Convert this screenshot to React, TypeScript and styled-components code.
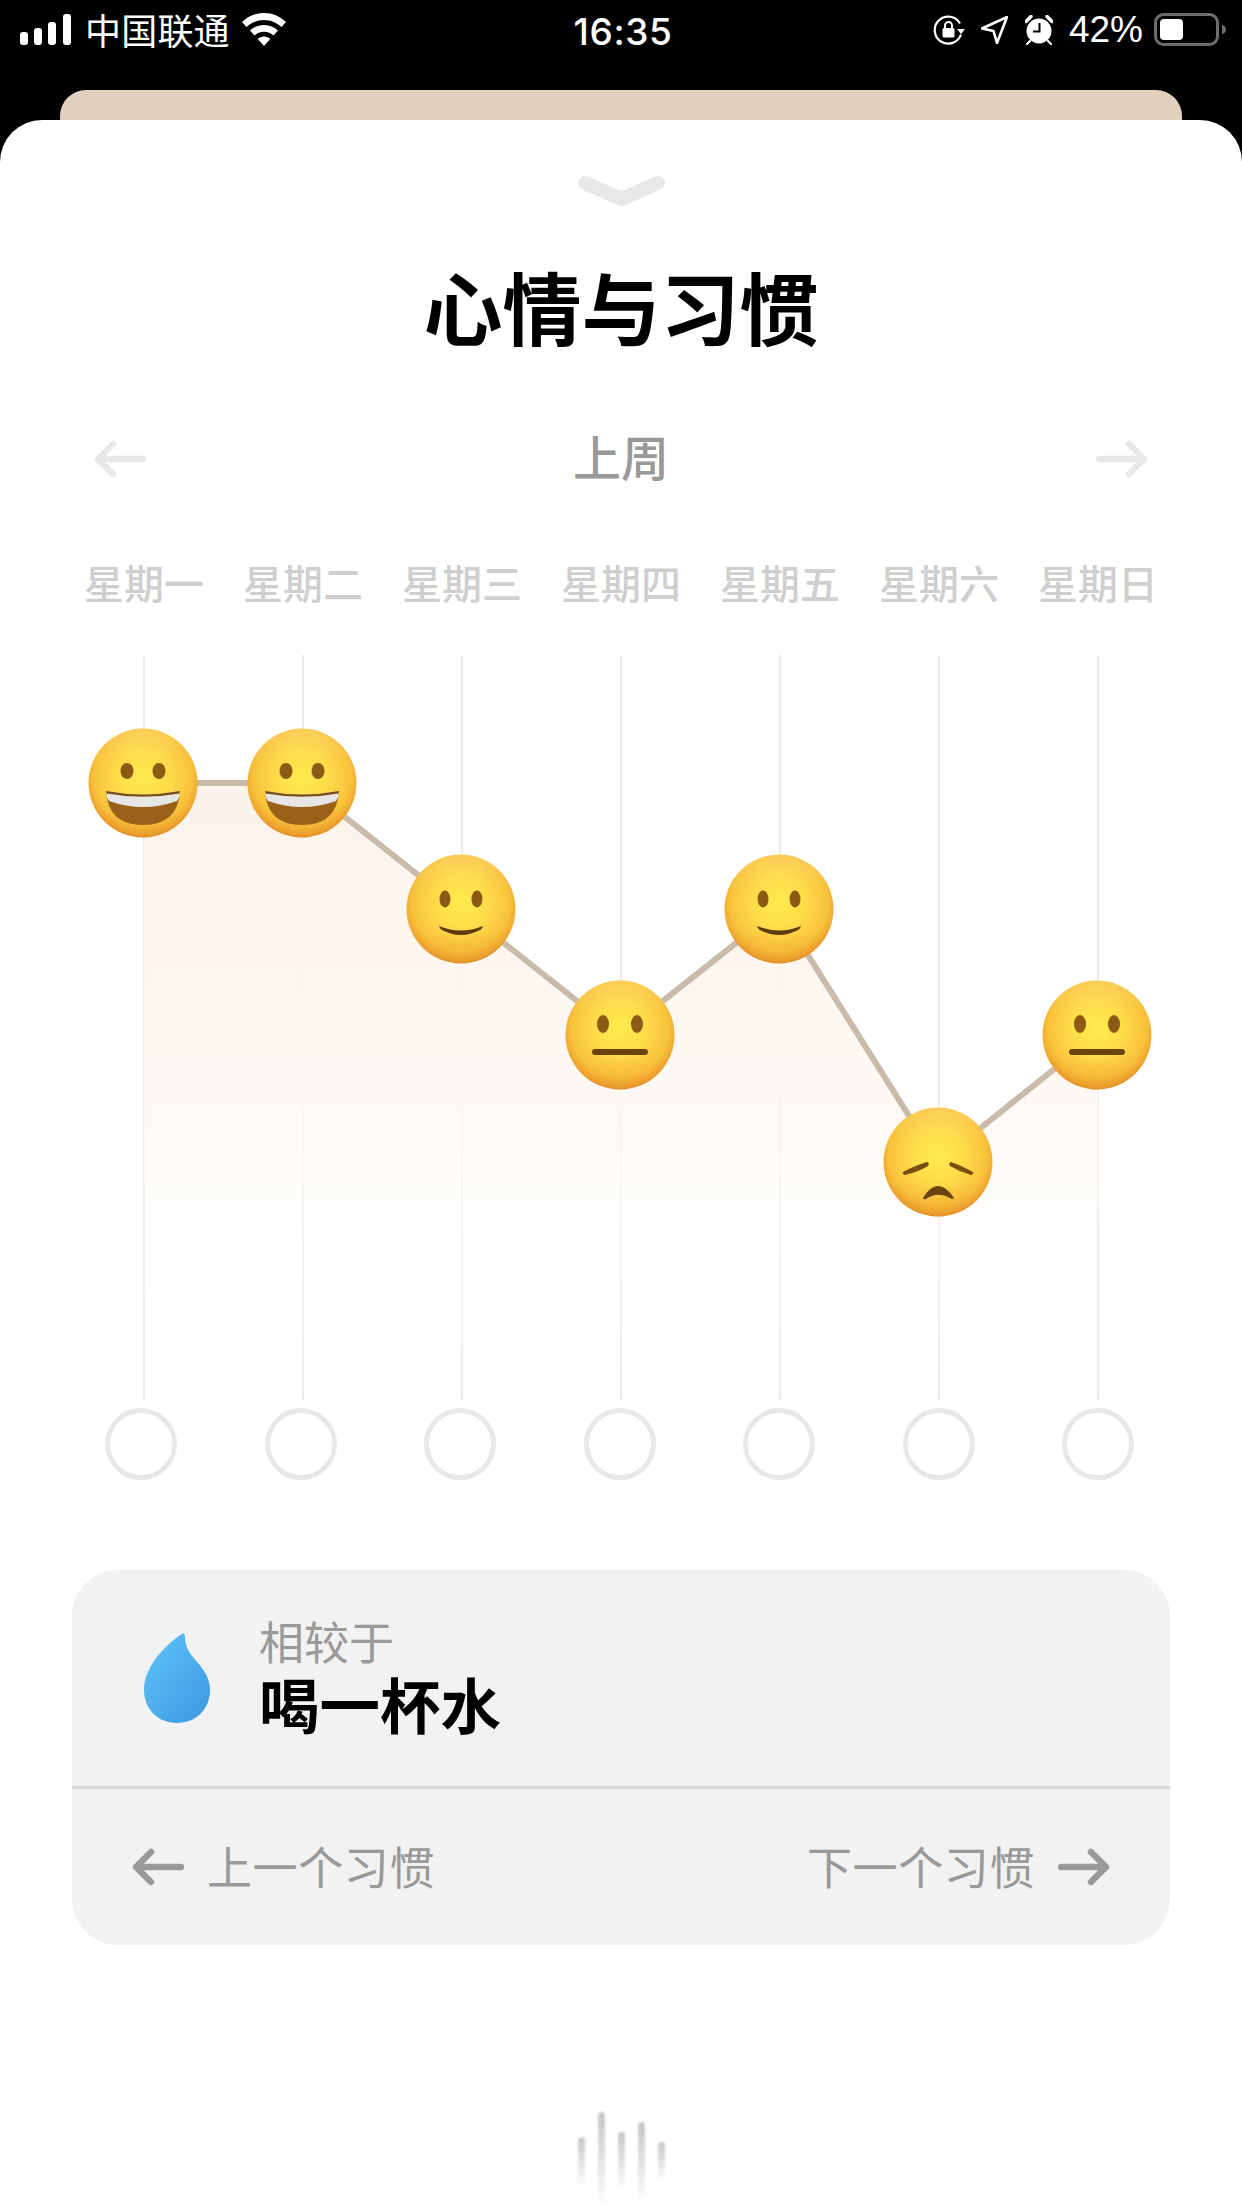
import React from 'react';
import styled, { createGlobalStyle } from 'styled-components';

const GlobalStyle = createGlobalStyle`
  html, body {
    margin: 0;
    padding: 0;
    background: #000;
  }
  * {
    box-sizing: border-box;
  }
`;

const cjk = `"Noto Sans CJK SC", "Liberation Sans", sans-serif`;

const Page = styled.div`
  width: 1242px;
  height: 2208px;
  background: #000;
  display: flex;
  flex-direction: column;
  overflow: hidden;
  font-family: ${cjk};
`;

const StatusBar = styled.div`
  height: 90px;
  padding: 13px 16px 0 20px;
  display: grid;
  grid-template-columns: 1fr auto 1fr;
  align-items: start;
  color: #fff;
`;

const StatusGroup = styled.div<{ $end?: boolean }>`
  display: flex;
  align-items: center;
  height: 33px;
  justify-content: ${(p) => (p.$end ? 'flex-end' : 'flex-start')};
`;

const Carrier = styled.span`
  font-size: 36px;
  font-weight: 400;
  line-height: 33px;
  letter-spacing: 0.2px;
  margin: 0 12px 0 14px;
`;

const Clock = styled.span`
  font-family: "Inter", "Liberation Sans", sans-serif;
  font-size: 37px;
  font-weight: 500;
  line-height: 38px;
  letter-spacing: 0.6px;
`;

const Battery = styled.span`
  font-family: "Liberation Sans", sans-serif;
  font-size: 37px;
  line-height: 33px;
  margin: 0 11px 0 16px;
`;

const StatusIcon = styled.svg<{ $gap?: number }>`
  display: block;
  flex: none;
  margin-left: ${(p) => p.$gap || 0}px;
`;

const BackCard = styled.div`
  height: 30px;
  margin: 0 60px;
  background: #e2d0bf;
  border-radius: 26px 26px 0 0;
`;

const Sheet = styled.div`
  flex: 1;
  background: #fff;
  border-radius: 42px 42px 0 0;
  display: flex;
  flex-direction: column;
  align-items: center;
`;

const Chevron = styled.svg`
  display: block;
  margin-top: 55px;
  margin-bottom: 1px;
`;

const Title = styled.h1`
  margin: 53px 0 4px;
  font-size: 79px;
  line-height: 90px;
  font-weight: 700;
  color: #000;
`;

const WeekNav = styled.div`
  width: 100%;
  height: 60px;
  margin-top: 74px;
  padding: 0 94px;
  display: flex;
  align-items: center;
  justify-content: space-between;
`;

const WeekLabel = styled.span`
  font-size: 48px;
  line-height: 60px;
  font-weight: 500;
  color: #999;
  margin-bottom: 8px;
`;

const DayGrid = styled.div<{ $top: number; $col: number; $shift?: number }>`
  margin-top: ${(p) => p.$top}px;
  margin-right: ${(p) => p.$shift || 0}px;
  display: grid;
  grid-template-columns: repeat(7, ${(p) => p.$col}px);
  justify-items: center;
`;

const DayName = styled.span`
  font-size: 40px;
  line-height: 50px;
  font-weight: 500;
  color: #cfcfcf;
`;

const Chart = styled.svg`
  display: block;
  margin-top: 48px;
  flex: none;
`;

const HabitDot = styled.div`
  width: 72px;
  height: 72px;
  border-radius: 50%;
  border: 5px solid #e8e8e8;
`;

const HabitCard = styled.div`
  width: 1098px;
  height: 375px;
  margin-top: 90px;
  background: #f2f2f2;
  border-radius: 46px;
  display: flex;
  flex-direction: column;
`;

const HabitInfo = styled.div`
  height: 219px;
  padding-left: 72px;
  display: flex;
  align-items: center;
  gap: 49px;
  border-bottom: 3px solid #d9d9d9;
`;

const HabitText = styled.div`
  display: flex;
  flex-direction: column;
  padding-bottom: 3px;
`;

const CompareLabel = styled.span`
  font-size: 45px;
  line-height: 52px;
  color: #999;
`;

const HabitName = styled.span`
  font-size: 60.5px;
  line-height: 72px;
  font-weight: 700;
  color: #000;
`;

const HabitNav = styled.div`
  flex: 1;
  padding: 0 60px;
  display: flex;
  align-items: center;
  justify-content: space-between;
`;

const NavLink = styled.div`
  display: flex;
  align-items: center;
  gap: 23px;
`;

const NavText = styled.span`
  font-size: 45px;
  letter-spacing: 0.6px;
  color: #999;
  margin-bottom: 4px;
`;

const Wave = styled.div`
  height: 91px;
  margin-top: 167px;
  display: flex;
  align-items: flex-start;
  gap: 13px;
  filter: blur(0.8px);
`;

const WaveBar = styled.div<{ $offset: number; $height: number }>`
  width: 7px;
  height: ${(p) => p.$height}px;
  margin-top: ${(p) => p.$offset}px;
  border-radius: 4px 4px 0 0;
  background: linear-gradient(180deg, #c6c6c6, rgba(200, 200, 200, 0.05));
`;

const days = ['星期一', '星期二', '星期三', '星期四', '星期五', '星期六', '星期日'];

type Mood = 'grin' | 'smile' | 'neutral' | 'sad';

const moods: { x: number; y: number; mood: Mood; lineX: number }[] = [
  { x: 143, y: 783, mood: 'grin', lineX: 144 },
  { x: 302, y: 783, mood: 'grin', lineX: 303 },
  { x: 461, y: 909, mood: 'smile', lineX: 462 },
  { x: 620, y: 1035, mood: 'neutral', lineX: 621 },
  { x: 779, y: 909, mood: 'smile', lineX: 780 },
  { x: 938, y: 1162, mood: 'sad', lineX: 939 },
  { x: 1097, y: 1035, mood: 'neutral', lineX: 1098 },
];

const waveBars = [
  { offset: 25, height: 47 },
  { offset: 0, height: 91 },
  { offset: 20, height: 56 },
  { offset: 10, height: 78 },
  { offset: 30, height: 37 },
];

function Arrow({ dir, color }: { dir: 'left' | 'right'; color: string }) {
  return (
    <svg width="52" height="38" viewBox="0 0 52 38" style={{ display: 'block', flex: 'none' }}>
      <g
        fill="none"
        stroke={color}
        strokeWidth="6.5"
        strokeLinecap="round"
        strokeLinejoin="round"
        transform={dir === 'right' ? 'matrix(-1 0 0 1 52 0)' : undefined}
      >
        <path d="M49 19H5" />
        <path d="M19 4L4 19l15 15" />
      </g>
    </svg>
  );
}

function Face({ x, y, mood }: { x: number; y: number; mood: Mood }) {
  const brown = '#8c5a14';
  return (
    <g transform={`translate(${x} ${y})`}>
      <circle r="54.5" fill="url(#faceFill)" />
      <circle r="54.5" fill="url(#faceShade)" />
      {mood === 'grin' && (
        <>
          <ellipse cx="-16" cy="-12" rx="6.5" ry="8" fill={brown} />
          <ellipse cx="16" cy="-12" rx="6.5" ry="8" fill={brown} />
          <path d="M-37 8Q0 16 37 8Q35 42 0 42Q-35 42-37 8Z" fill="#9a6218" />
          <path d="M-37 8Q0 15 37 8Q37 14 34 18Q0 30-34 18Q-37 14-37 8Z" fill="#e6e6e6" />
          <path d="M-37 8Q0 15 37 8L36.500 10.500Q0 17-36.500 10.500Z" fill="#7a4e12" />
        </>
      )}
      {mood === 'smile' && (
        <>
          <ellipse cx="-16" cy="-10" rx="5.500" ry="8.500" fill={brown} />
          <ellipse cx="16" cy="-10" rx="5.500" ry="8.500" fill={brown} />
          <path d="M-22 17Q0 26 22 17Q21 20 19 21Q0 31-19 21Q-21 20-22 17Z" fill="#5f3a0c" />
        </>
      )}
      {mood === 'neutral' && (
        <>
          <ellipse cx="-17" cy="-11" rx="6" ry="9" fill={brown} />
          <ellipse cx="17" cy="-11" rx="6" ry="9" fill={brown} />
          <rect x="-28" y="14" width="56" height="6" rx="3" fill="#6b4410" />
        </>
      )}
      {mood === 'sad' && (
        <>
          <path d="M-35 10Q-22 3-11 0Q-8 1-10 4Q-20 10-33 13Q-36 12-35 10Z" fill="#7a4e12" />
          <path d="M35 10Q22 3 13 0Q10 1 12 4Q22 10 33 13Q36 12 35 10Z" fill="#7a4e12" />
          <path d="M-15 36Q-8 24 0 24Q8 24 16 36Q15 38 12 36Q0 29-12 37Q-15 38-15 36Z" fill="#6b4410" />
        </>
      )}
    </g>
  );
}

export default function App() {
  const line = moods.map((m) => `${m.x},${m.y}`).join(' ');
  const area = `144,783 ${moods.slice(1, 6).map((m) => `${m.x},${m.y}`).join(' ')} 1098,1035 1098,1400 144,1400`;

  return (
    <Page>
      <GlobalStyle />
      <StatusBar>
        <StatusGroup>
          <StatusIcon width="51" height="33" viewBox="0 0 51 33">
            <rect x="0" y="19" width="8" height="13" rx="3" fill="#fff" />
            <rect x="14" y="15" width="8" height="17" rx="3" fill="#fff" />
            <rect x="28" y="9" width="8" height="23" rx="3" fill="#fff" />
            <rect x="43" y="1" width="8" height="31" rx="3" fill="#fff" />
          </StatusIcon>
          <Carrier>中国联通</Carrier>
          <StatusIcon width="44" height="33" viewBox="0 0 44 33">
            <path d="M22 0C13.500 0 6 3.300 0 9l4.500 5C9 9.800 15 7 22 7s13 2.800 17.500 7l4.500-5C38 3.300 30.500 0 22 0Z" fill="#fff" />
            <path d="M22 12c-5.500 0-10.500 2.100-14 5.500l4.500 5c2.400-2.300 5.800-3.700 9.500-3.700s7.100 1.400 9.500 3.700l4.500-5C32.500 14.100 27.500 12 22 12Z" fill="#fff" />
            <path d="M22 23.500c-2.500 0-4.700 1-6.300 2.500L22 33l6.300-7c-1.600-1.500-3.800-2.500-6.300-2.500Z" fill="#fff" />
          </StatusIcon>
        </StatusGroup>
        <Clock>16:35</Clock>
        <StatusGroup $end>
          <StatusIcon width="32" height="30" viewBox="0 0 32 30">
            <path d="M28 19.500A13.500 13.500 0 1 1 27 8.500" fill="none" stroke="#fff" strokeWidth="2.200" />
            <path d="M24 14h8l-4 5Z" fill="#fff" />
            <rect x="9.500" y="13" width="12" height="9.500" rx="1.500" fill="#fff" />
            <path d="M12 13v-2.500a3.500 3.500 0 0 1 7 0V13" fill="none" stroke="#fff" strokeWidth="2" />
          </StatusIcon>
          <StatusIcon $gap={16} width="27" height="28" viewBox="0 0 27 28">
            <path d="M26 1L1 12.500l11.500 2.500L16 27Z" fill="none" stroke="#fff" strokeWidth="2.600" strokeLinejoin="round" />
          </StatusIcon>
          <StatusIcon $gap={17} width="28" height="30" viewBox="0 0 28 30">
            <circle cx="14" cy="16" r="12.500" fill="#fff" />
            <path d="M14.500 8v8.500H8" fill="none" stroke="#000" strokeWidth="2" />
            <path d="M1 6.500L6 1.500M27 6.500L22 1.500" stroke="#fff" strokeWidth="3.500" strokeLinecap="round" />
            <path d="M5 26l-3 3M23 26l3 3" stroke="#fff" strokeWidth="2.200" strokeLinecap="round" />
          </StatusIcon>
          <Battery>42%</Battery>
          <StatusIcon width="72" height="33" viewBox="0 0 72 33">
            <rect x="1.500" y="1.500" width="62" height="30" rx="8" fill="none" stroke="#6d6d6d" strokeWidth="3" />
            <rect x="6" y="6" width="23" height="21" rx="4" fill="#fff" />
            <path d="M68 12c2.500.5 4 2.300 4 4.500s-1.500 4-4 4.500Z" fill="#6d6d6d" />
          </StatusIcon>
        </StatusGroup>
      </StatusBar>
      <BackCard />
      <Sheet>
        <Chevron width="89" height="32" viewBox="0 0 89 32">
          <path d="M8 8l36.500 16L81 8" fill="none" stroke="#e8e8e8" strokeWidth="14" strokeLinecap="round" strokeLinejoin="round" />
        </Chevron>
        <Title>心情与习惯</Title>
        <WeekNav>
          <Arrow dir="left" color="#e8e8e8" />
          <WeekLabel>上周</WeekLabel>
          <Arrow dir="right" color="#e8e8e8" />
        </WeekNav>
        <DayGrid $top={68} $col={159}>
          {days.map((d) => (
            <DayName key={d}>{d}</DayName>
          ))}
        </DayGrid>
        <Chart width="1242" height="745" viewBox="0 655 1242 745">
          <defs>
            <linearGradient id="areaFill" x1="0" y1="0" x2="0" y2="1">
              <stop offset="0" stopColor="#fcf3ea" stopOpacity="0.95" />
              <stop offset="0.5" stopColor="#fdf8f2" stopOpacity="0.9" />
              <stop offset="1" stopColor="#ffffff" stopOpacity="0" />
            </linearGradient>
            <radialGradient id="faceFill" cx="50%" cy="44%" r="56%">
              <stop offset="0" stopColor="#ffec4f" />
              <stop offset="0.45" stopColor="#fedb49" />
              <stop offset="0.8" stopColor="#f9c23c" />
              <stop offset="0.94" stopColor="#eea42e" />
              <stop offset="1" stopColor="#dc8a28" />
            </radialGradient>
            <linearGradient id="faceShade" x1="0" y1="0" x2="0" y2="1">
              <stop offset="0" stopColor="#fff3c4" stopOpacity="0.2" />
              <stop offset="0.3" stopColor="#fff3c4" stopOpacity="0" />
              <stop offset="0.7" stopColor="#e8962a" stopOpacity="0" />
              <stop offset="1" stopColor="#e8962a" stopOpacity="0.35" />
            </linearGradient>
          </defs>
          {moods.map((m) => (
            <line key={m.x} x1={m.lineX} y1="655" x2={m.lineX} y2="1400" stroke="#ebebeb" strokeWidth="2" />
          ))}
          <polygon points={area} fill="url(#areaFill)" />
          <polyline points={line} fill="none" stroke="#c9bbaa" strokeWidth="6" />
          {moods.map((m) => (
            <Face key={m.x} x={m.x} y={m.y} mood={m.mood} />
          ))}
        </Chart>
        <DayGrid $top={8} $col={159.5} $shift={3}>
          {days.map((d) => (
            <HabitDot key={d} />
          ))}
        </DayGrid>
        <HabitCard>
          <HabitInfo>
            <svg width="66" height="90" viewBox="0 0 66 90" style={{ display: 'block', flex: 'none' }}>
              <defs>
                <linearGradient id="dropFill" x1="0.1" y1="0.1" x2="0.9" y2="0.9">
                  <stop offset="0" stopColor="#5cc0f6" />
                  <stop offset="1" stopColor="#3f9ce4" />
                </linearGradient>
              </defs>
              <path
                d="M38 1C24 10 0 32 0 57c0 19 14 33 33 33s33-14 33-33c0-15-9-23-17-33-6-7-8-14-8-21 0-2-1.500-3-3-2Z"
                fill="url(#dropFill)"
              />
            </svg>
            <HabitText>
              <CompareLabel>相较于</CompareLabel>
              <HabitName>喝一杯水</HabitName>
            </HabitText>
          </HabitInfo>
          <HabitNav>
            <NavLink>
              <Arrow dir="left" color="#999" />
              <NavText>上一个习惯</NavText>
            </NavLink>
            <NavLink>
              <NavText>下一个习惯</NavText>
              <Arrow dir="right" color="#999" />
            </NavLink>
          </HabitNav>
        </HabitCard>
        <Wave>
          {waveBars.map((b) => (
            <WaveBar key={b.offset} $offset={b.offset} $height={b.height} />
          ))}
        </Wave>
      </Sheet>
    </Page>
  );
}
